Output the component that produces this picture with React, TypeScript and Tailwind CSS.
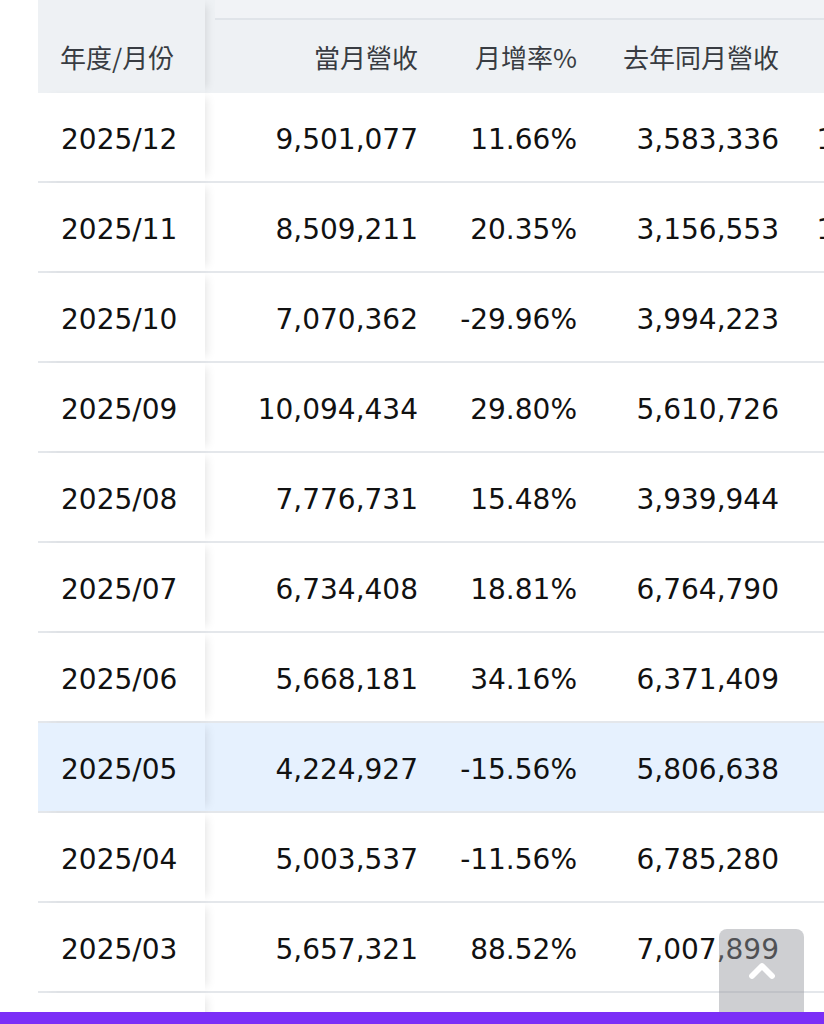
import { ChevronUp } from 'lucide-react';

type Row = {
  month: string;
  revenue: string;
  mom: string;
  lastYear: string;
  yoy: string;
};

const rows: Row[] = [
  { month: '2025/12', revenue: '9,501,077', mom: '11.66%', lastYear: '3,583,336', yoy: '165.15%' },
  { month: '2025/11', revenue: '8,509,211', mom: '20.35%', lastYear: '3,156,553', yoy: '169.57%' },
  { month: '2025/10', revenue: '7,070,362', mom: '-29.96%', lastYear: '3,994,223', yoy: '77.01%' },
  { month: '2025/09', revenue: '10,094,434', mom: '29.80%', lastYear: '5,610,726', yoy: '79.91%' },
  { month: '2025/08', revenue: '7,776,731', mom: '15.48%', lastYear: '3,939,944', yoy: '97.38%' },
  { month: '2025/07', revenue: '6,734,408', mom: '18.81%', lastYear: '6,764,790', yoy: '-0.45%' },
  { month: '2025/06', revenue: '5,668,181', mom: '34.16%', lastYear: '6,371,409', yoy: '-11.04%' },
  { month: '2025/05', revenue: '4,224,927', mom: '-15.56%', lastYear: '5,806,638', yoy: '-27.24%' },
  { month: '2025/04', revenue: '5,003,537', mom: '-11.56%', lastYear: '6,785,280', yoy: '-26.26%' },
  { month: '2025/03', revenue: '5,657,321', mom: '88.52%', lastYear: '7,007,899', yoy: '-19.27%' },
  { month: '2025/02', revenue: '3,005,215', mom: '-21.04%', lastYear: '5,331,097', yoy: '-43.63%' },
];

const HIGHLIGHT = '2025/05';

export default function App() {
  return (
    <div className="relative w-[824px] h-[1024px] overflow-hidden bg-white font-['DejaVu_Sans','Noto_Sans_CJK_TC',sans-serif] text-[28px] text-[#111]">
      {/* Table */}
      <div className="ml-[38px] w-[925px]">
        {/* Header */}
        <div className="flex h-[93px] bg-[#eef1f4] font-['Noto_Sans_CJK_TC',sans-serif] text-[26px] text-[#383c42]">
          <div className="relative z-10 w-[167px] shrink-0 flex items-center pl-[22px] pt-[20px] rounded-bl-[10px] bg-[#eef1f4] shadow-[7px_0_9px_-5px_rgba(0,0,0,0.1)]">
            年度/月份
          </div>
          <div className="flex-1 flex flex-col">
            <div className="h-[20px] ml-[10px] border-b-2 border-[#e0e4e9] bg-[#f1f3f6]" />
            <div className="flex-1 flex items-center">
              <div className="w-[235px] text-right pr-[22px]">當月營收</div>
              <div className="w-[159px] text-right pr-[22px]">月增率%</div>
              <div className="w-[202px] text-right pr-[22px]">去年同月營收</div>
              <div className="w-[162px] text-right pr-[22px]">年增率%</div>
            </div>
          </div>
        </div>

        {/* Body */}
        {rows.map((row) => (
          <div
            key={row.month}
            className={`flex h-[90px] items-stretch border-b-2 border-[#e4e7eb] ${
              row.month === HIGHLIGHT ? 'bg-[#e6f1fe]' : 'bg-white'
            }`}
          >
            <div
              className={`relative z-10 w-[167px] shrink-0 flex items-center pl-[23px] pt-[6px] shadow-[7px_0_9px_-5px_rgba(0,0,0,0.1)] ${
                row.month === HIGHLIGHT ? 'bg-[#e6f1fe]' : 'bg-white'
              }`}
            >
              {row.month}
            </div>
            <div className="w-[235px] flex items-center justify-end pr-[22px] pt-[6px]">{row.revenue}</div>
            <div className="w-[159px] flex items-center justify-end pr-[22px] pt-[6px]">{row.mom}</div>
            <div className="w-[202px] flex items-center justify-end pr-[22px] pt-[6px]">{row.lastYear}</div>
            <div className="w-[162px] flex items-center justify-end pr-[22px] pt-[6px]">{row.yoy}</div>
          </div>
        ))}
      </div>

      {/* Back to top */}
      <button className="absolute left-[719px] top-[929px] w-[85px] h-[95px] rounded-t-[8px] bg-[rgba(150,154,160,0.47)] flex justify-center pt-[22px] text-white z-20">
        <ChevronUp size={40} strokeWidth={3.5} />
      </button>

      {/* Bottom bar */}
      <div className="absolute left-0 right-0 bottom-0 h-[12px] bg-[#7b2ff7] z-30" />
    </div>
  );
}
